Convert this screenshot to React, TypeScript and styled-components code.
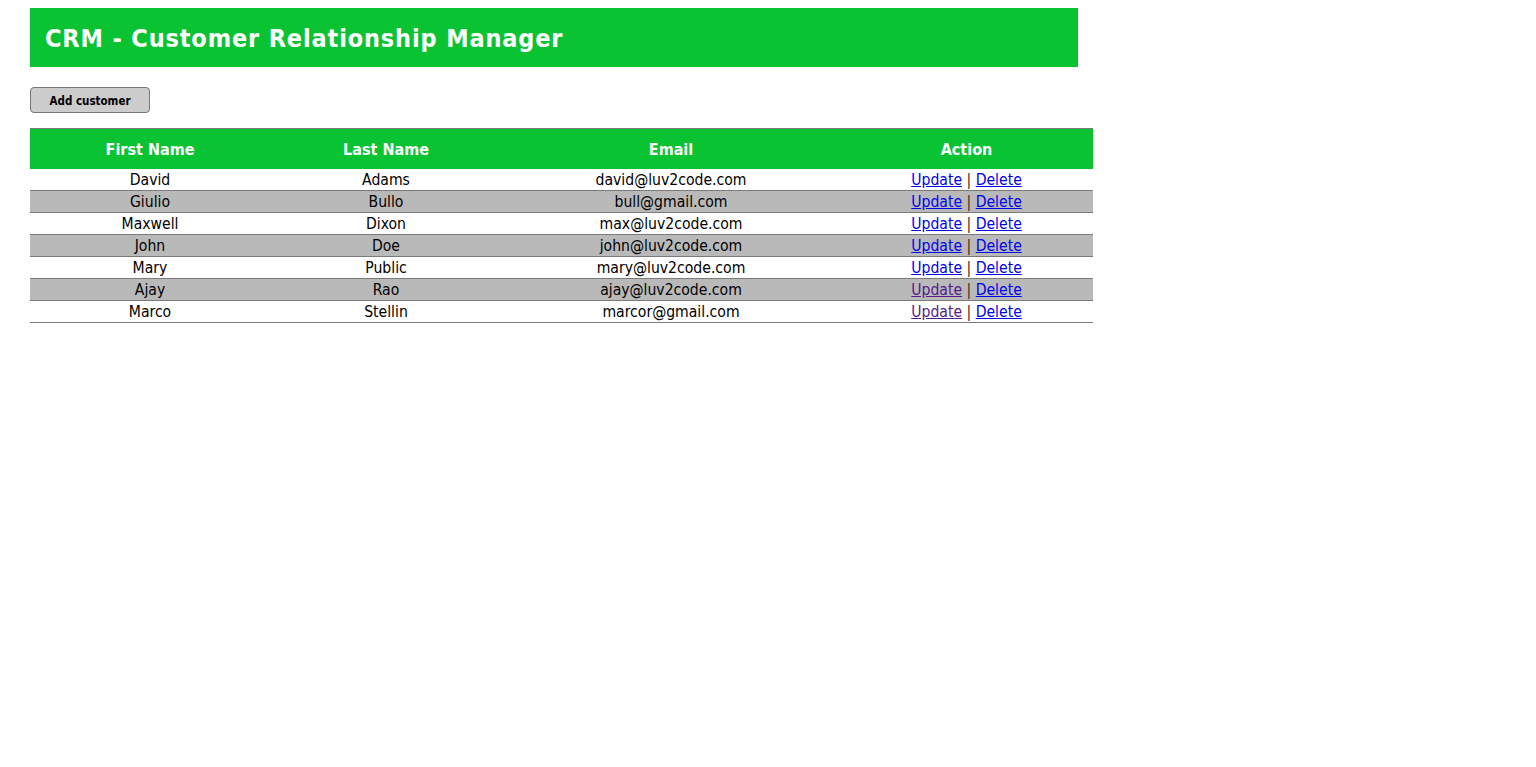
import React from "react";
import styled, { createGlobalStyle } from "styled-components";

const Global = createGlobalStyle`
  html, body { margin: 0; padding: 0; background: #fff; }
  body { font-family: "DejaVu Sans Condensed", "DejaVu Sans", sans-serif; color: #000; }
`;

const Page = styled.div`
  padding: 8px 0 0 30px;
`;

const Header = styled.header`
  width: 1033px;
  height: 59px;
  background: #09c332;
  padding-left: 15px;
  display: flex;
  align-items: center;
  box-sizing: content-box;
`;

const Title = styled.h2`
  margin: 2px 0 0 0;
  color: #fff;
  font-size: 25px;
  letter-spacing: 0.85px;
  font-weight: bold;
`;

const Toolbar = styled.div`
  margin-top: 20px;
  height: 26px;
`;

const AddButton = styled.button`
  width: 120px;
  height: 26px;
  background: #cccccc;
  border: 1px solid #777;
  border-radius: 4px;
  font-family: inherit;
  font-size: 11.5px;
  font-weight: bold;
  color: #000;
  padding: 1px 0 0 0;
`;

const Table = styled.table`
  margin-top: 15px;
  width: 1063px;
  border-collapse: collapse;
  table-layout: fixed;
`;

const HeadRow = styled.tr`
  background: #09c332;
  border-top: 1px solid #7a7a7a;
`;

const Th = styled.th<{ $w: number }>`
  width: ${(p) => p.$w}px;
  height: 40px;
  color: #fff;
  font-size: 16px;
  font-weight: bold;
  text-align: center;
  padding: 0;
`;

const Row = styled.tr<{ $alt: boolean }>`
  background: ${(p) => (p.$alt ? "#b9b9b9" : "#fff")};
  border-bottom: 1px solid #7a7a7a;
`;

const Td = styled.td`
  height: 19px;
  padding: 2px 0 0 0;
  text-align: center;
  font-size: 15.6px;
  line-height: 19px;
`;

const Link = styled.a<{ $visited?: boolean }>`
  color: ${(p) => (p.$visited ? "#551a8b" : "#0000ee")};
  text-decoration: underline;
`;

const Sep = styled.span`
  color: #3a2a1a;
`;

const customers = [
  ["David", "Adams", "david@luv2code.com", false],
  ["Giulio", "Bullo", "bull@gmail.com", false],
  ["Maxwell", "Dixon", "max@luv2code.com", false],
  ["John", "Doe", "john@luv2code.com", false],
  ["Mary", "Public", "mary@luv2code.com", false],
  ["Ajay", "Rao", "ajay@luv2code.com", true],
  ["Marco", "Stellin", "marcor@gmail.com", true],
] as const;

export default function App() {
  return (
    <>
      <Global />
      <Page>
        <Header>
          <Title>CRM - Customer Relationship Manager</Title>
        </Header>
        <Toolbar>
          <AddButton>Add customer</AddButton>
        </Toolbar>
        <Table>
          <thead>
            <HeadRow>
              <Th $w={240}>First Name</Th>
              <Th $w={232}>Last Name</Th>
              <Th $w={338}>Email</Th>
              <Th $w={253}>Action</Th>
            </HeadRow>
          </thead>
          <tbody>
            {customers.map(([f, l, e, v], i) => (
              <Row key={e} $alt={i % 2 === 1}>
                <Td>{f}</Td>
                <Td>{l}</Td>
                <Td>{e}</Td>
                <Td>
                  <Link href="#" $visited={v}>Update</Link>
                  <Sep> | </Sep>
                  <Link href="#">Delete</Link>
                </Td>
              </Row>
            ))}
          </tbody>
        </Table>
      </Page>
    </>
  );
}
